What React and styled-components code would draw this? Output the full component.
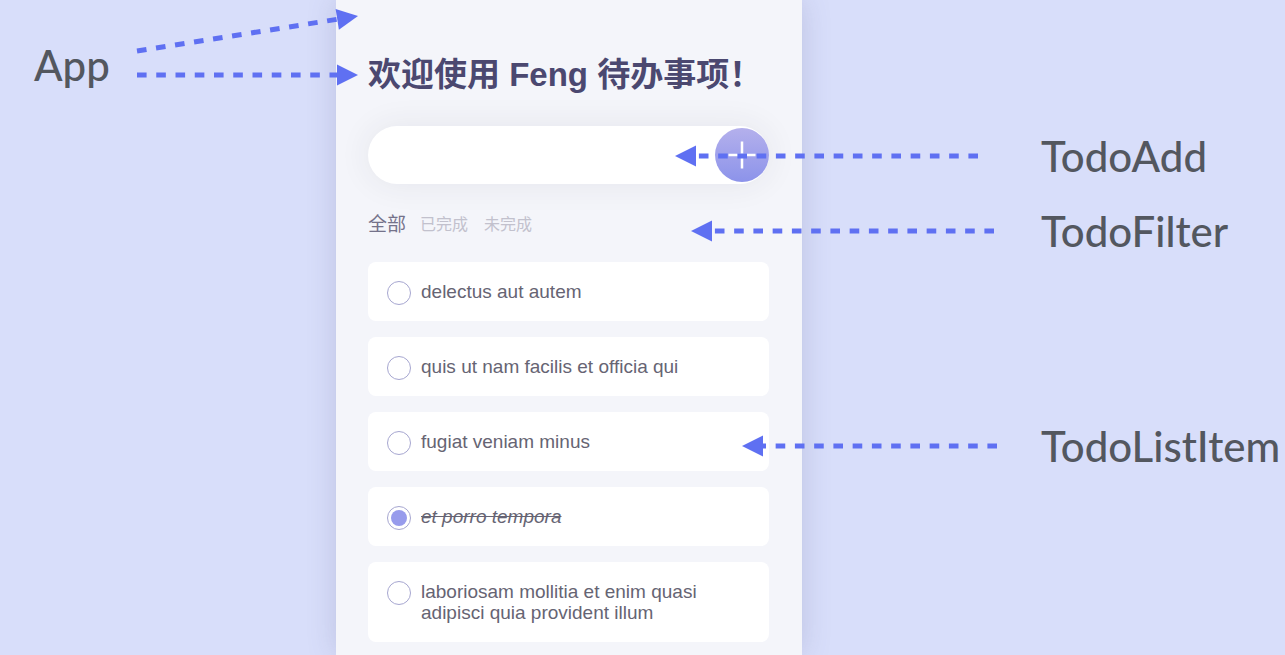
import React, { useState } from "react";
import styled, { createGlobalStyle } from "styled-components";

const GlobalStyle = createGlobalStyle`
  *, *::before, *::after { box-sizing: border-box; }
  body {
    margin: 0;
    background: #d8defa;
    font-family: "Liberation Sans", "Noto Sans CJK SC", sans-serif;
  }
`;

const Page = styled.main`
  display: grid;
  grid-template-columns: minmax(0, 16fr) 466px minmax(0, 23fr);
  min-height: 100vh;
  overflow: hidden;
`;

const LabelColumn = styled.aside`
  display: flex;
  flex-direction: column;
  gap: 19px;
  padding-top: ${(p) => p.$top}px;
  padding-left: ${(p) => p.$indent}px;
`;

const Label = styled.span`
  font-family: Lato, sans-serif;
  font-size: 42px;
  font-weight: 500;
  line-height: 56px;
  color: #53575f;
  white-space: nowrap;
  margin-top: ${(p) => (p.$spaced ? 140 : 0)}px;
`;

const Panel = styled.section`
  position: relative;
  padding: 51px 33px 12px 32px;
  background: #f4f5fa;
  box-shadow: 0 0 28px rgba(80, 80, 130, 0.2);
`;

const Title = styled.h1`
  margin: 0 0 27px;
  font-size: 33px;
  line-height: 48px;
  color: #4b4870;
  white-space: nowrap;
`;

const AddForm = styled.form`
  display: flex;
  align-items: center;
  height: 58px;
  border-radius: 29px;
  background: #fff;
  box-shadow: 0 0 32px rgba(50, 50, 70, 0.08);
`;

const AddInput = styled.input`
  flex: 1;
  min-width: 0;
  height: 100%;
  padding: 0 24px;
  border: 0;
  outline: 0;
  background: transparent;
  font: inherit;
  font-size: 19px;
  color: #626070;
`;

const AddButton = styled.button`
  display: grid;
  place-items: center;
  width: 54px;
  height: 54px;
  padding: 0;
  border: 0;
  border-radius: 50%;
  background: linear-gradient(180deg, #b4b0ec, #8c93ea);
  cursor: pointer;
`;

const Filters = styled.nav`
  display: flex;
  align-items: center;
  gap: 16px;
  height: 32px;
  margin: 25px 0 21px;
`;

const FilterButton = styled.button`
  padding: 0;
  border: 0;
  margin-right: ${(p) => (p.$active ? -2 : 0)}px;
  background: transparent;
  font: inherit;
  font-size: ${(p) => (p.$active ? 19 : 16)}px;
  line-height: 32px;
  color: ${(p) => (p.$active ? "#74728a" : "#c2c1cd")};
  cursor: pointer;
`;

const List = styled.ul`
  display: flex;
  flex-direction: column;
  gap: 16px;
  margin: 0;
  padding: 0;
  list-style: none;
`;

const Item = styled.li`
  border-radius: 8px;
  background: #fff;
`;

const ItemLabel = styled.label`
  display: flex;
  align-items: flex-start;
  gap: 10px;
  padding: 19px;
  font-size: 19px;
  line-height: 21px;
  color: #666473;
  cursor: pointer;
`;

const Check = styled.input`
  appearance: none;
  flex: none;
  width: 24px;
  height: 24px;
  margin: 0 0 -3px;
  border: 1px solid #a6a6d0;
  border-radius: 50%;
  background: #fff;
  cursor: pointer;

  &:checked {
    padding: 3px;
    background: #979bec content-box;
  }
`;

const ItemText = styled.span`
  font-style: ${(p) => (p.$done ? "italic" : "normal")};
  text-decoration: ${(p) => (p.$done ? "line-through" : "none")};
`;

const Overlay = styled.svg`
  position: absolute;
  top: 0;
  left: 0;
  width: 100%;
  height: 100%;
  overflow: visible;
  pointer-events: none;
`;

const arrows = [
  { from: [-199, 51], to: [22, 16] },
  { from: [-199, 75], to: [22, 75] },
  { from: [642, 156], to: [339, 156] },
  { from: [658, 231], to: [355, 231] },
  { from: [661, 446], to: [406, 446] },
];

function Arrow({ from, to }) {
  const dx = to[0] - from[0];
  const dy = to[1] - from[1];
  const length = Math.hypot(dx, dy);
  const angle = (Math.atan2(dy, dx) * 180) / Math.PI;
  return (
    <g transform={`translate(${from[0]} ${from[1]}) rotate(${angle})`}>
      <line
        x2={length - 18}
        stroke="#5f70f2"
        strokeWidth="5"
        strokeDasharray="9.6 9.65"
      />
      <path d={`M${length} 0l-21-10.5v21z`} fill="#5f70f2" />
    </g>
  );
}

const initialTodos = [
  { id: 1, text: "delectus aut autem", done: false },
  { id: 2, text: "quis ut nam facilis et officia qui", done: false },
  { id: 3, text: "fugiat veniam minus", done: false },
  { id: 4, text: "et porro tempora", done: true },
  {
    id: 5,
    text: "laboriosam mollitia et enim quasi adipisci quia provident illum",
    done: false,
  },
];

const filters = ["全部", "已完成", "未完成"];

export default function App() {
  const [todos, setTodos] = useState(initialTodos);
  const [filter, setFilter] = useState(filters[0]);
  const [draft, setDraft] = useState("");

  const visible = todos.filter(
    (t) => filter === filters[0] || t.done === (filter === filters[1])
  );

  const toggle = (id) =>
    setTodos(todos.map((t) => (t.id === id ? { ...t, done: !t.done } : t)));

  const add = (e) => {
    e.preventDefault();
    if (!draft.trim()) return;
    setTodos([...todos, { id: Date.now(), text: draft, done: false }]);
    setDraft("");
  };

  return (
    <>
      <GlobalStyle />
      <Page>
        <LabelColumn $top={37} $indent={34}>
          <Label>App</Label>
        </LabelColumn>
        <Panel>
          <Title>欢迎使用 Feng 待办事项！</Title>
          <AddForm onSubmit={add}>
            <AddInput
              aria-label="待办事项"
              value={draft}
              onChange={(e) => setDraft(e.target.value)}
            />
            <AddButton type="submit" aria-label="添加">
              <svg width="28" height="28" viewBox="0 0 28 28" aria-hidden="true">
                <path d="M14 .5v27M.5 14h27" stroke="#fff" strokeWidth="2.5" />
              </svg>
            </AddButton>
          </AddForm>
          <Filters>
            {filters.map((name) => (
              <FilterButton
                key={name}
                type="button"
                $active={name === filter}
                onClick={() => setFilter(name)}
              >
                {name}
              </FilterButton>
            ))}
          </Filters>
          <List>
            {visible.map((t) => (
              <Item key={t.id}>
                <ItemLabel>
                  <Check
                    type="checkbox"
                    checked={t.done}
                    onChange={() => toggle(t.id)}
                  />
                  <ItemText $done={t.done}>{t.text}</ItemText>
                </ItemLabel>
              </Item>
            ))}
          </List>
          <Overlay aria-hidden="true">
            {arrows.map((a, i) => (
              <Arrow key={i} {...a} />
            ))}
          </Overlay>
        </Panel>
        <LabelColumn $top={128} $indent={239}>
          <Label>TodoAdd</Label>
          <Label>TodoFilter</Label>
          <Label $spaced>TodoListItem</Label>
        </LabelColumn>
      </Page>
    </>
  );
}
